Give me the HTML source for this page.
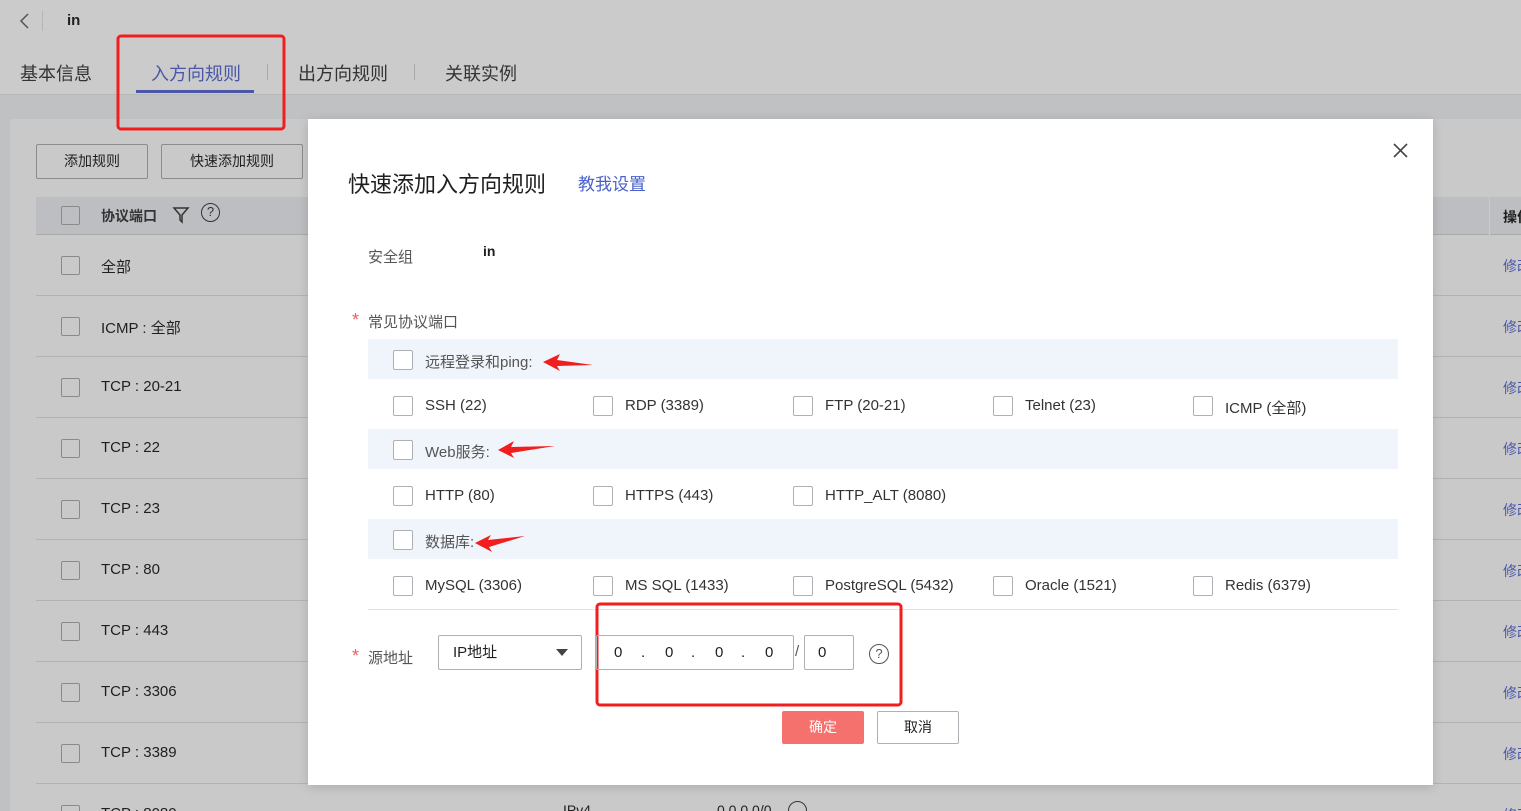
<!DOCTYPE html><html style="width:1521px;height:811px;overflow:hidden"><head><meta charset="utf-8"><style>
*{margin:0;padding:0;box-sizing:border-box}
body{width:1521px;height:811px;overflow:hidden;position:relative;background:#c0c1c3;font-family:"Liberation Sans","Noto Sans CJK SC",sans-serif;color:#1f1f1f}
.a{position:absolute;white-space:nowrap}
.cb{position:absolute;width:19px;height:19px;border:1px solid #8a8a8a;border-radius:2px}
.mcb{position:absolute;width:20px;height:20px;border:1px solid #aeb0b6;border-radius:2px;background:#fff}
.t14{font-size:15px}
.st{position:absolute;color:#f06060;font-size:18px}
</style></head><body>
<div class="a" style="left:0;top:0;width:1521px;height:95px;background:#cbcbcb;border-bottom:1px solid #b8b8b8"></div>
<svg class="a" style="left:18px;top:12px" width="14" height="18"><path d="M10 2 L3 9 L10 16" stroke="#555" stroke-width="1.5" fill="none"/></svg>
<div class="a" style="left:42px;top:11px;width:1px;height:20px;background:#b5b5b5"></div>
<div class="a" style="left:67px;top:12px;font-size:15px;font-weight:bold">in</div>
<div class="a" style="left:20px;top:60px;font-size:18px;color:#333">基本信息</div>
<div class="a" style="left:151px;top:60px;font-size:18px;color:#4a57a8">入方向规则</div>
<div class="a" style="left:136px;top:90px;width:118px;height:3px;background:#4a57a8"></div>
<div class="a" style="left:267px;top:64px;width:1px;height:16px;background:#aaa"></div>
<div class="a" style="left:298px;top:60px;font-size:18px;color:#333">出方向规则</div>
<div class="a" style="left:414px;top:64px;width:1px;height:16px;background:#aaa"></div>
<div class="a" style="left:445px;top:60px;font-size:18px;color:#333">关联实例</div>
<div class="a" style="left:10px;top:119px;width:1511px;height:692px;background:#c9c9c9"></div>
<div class="a" style="left:36px;top:144px;width:112px;height:35px;border:1px solid #8c8c8c;border-radius:2px;font-size:14px;text-align:center;line-height:33px">添加规则</div>
<div class="a" style="left:161px;top:144px;width:142px;height:35px;border:1px solid #8c8c8c;border-radius:2px;font-size:14px;text-align:center;line-height:33px">快速添加规则</div>
<div class="a" style="left:36px;top:197px;width:1485px;height:38px;background:#bdbec2;border-bottom:1px solid #aaa"></div>
<div class="cb" style="left:61px;top:206px"></div>
<div class="a" style="left:101px;top:206px;font-size:14px;font-weight:bold;color:#333">协议端口</div>
<svg class="a" style="left:172px;top:206px" width="18" height="18"><path d="M2 2 H16 L10 9 V16 L8 14 V9 Z" stroke="#333" stroke-width="1.5" fill="none"/></svg>
<div class="a" style="left:201px;top:203px;width:19px;height:19px;border:1.5px solid #333;border-radius:50%;font-size:13px;text-align:center;line-height:16px;color:#333">?</div>
<div class="a" style="left:1489px;top:197px;width:1px;height:38px;background:#ccc"></div>
<div class="a" style="left:1503px;top:207px;font-size:14px;font-weight:bold">操作</div>
<div id="rows"></div>
<div class="a" style="left:563px;top:802px;font-size:14px">IPv4</div>
<div class="a" style="left:717px;top:802px;font-size:14px">0.0.0.0/0</div>
<div class="a" style="left:788px;top:801px;width:19px;height:19px;border:1.5px solid #333;border-radius:50%"></div>
<div class="a" style="left:308px;top:119px;width:1125px;height:666px;background:#fff;box-shadow:0 2px 10px rgba(0,0,0,.15)"></div>
<svg class="a" style="left:1393px;top:143px" width="15" height="15"><path d="M1 1 L14 14 M14 1 L1 14" stroke="#444" stroke-width="1.6"/></svg>
<div class="a" style="left:348px;top:167px;font-size:22px;color:#1f1f1f">快速添加入方向规则</div>
<div class="a" style="left:578px;top:170px;font-size:17px;color:#4a61c9">教我设置</div>
<div class="a t14" style="left:368px;top:246px;color:#555">安全组</div>
<div class="a" style="left:483px;top:243px;font-size:14px;font-weight:bold">in</div>
<div class="st" style="left:352px;top:310px">*</div><div class="a t14" style="left:368px;top:311px;color:#555">常见协议端口</div>
<div class="a" style="left:368px;top:339px;width:1030px;height:40px;background:#f0f4fb"></div>
<div class="a" style="left:368px;top:429px;width:1030px;height:40px;background:#f0f4fb"></div>
<div class="a" style="left:368px;top:519px;width:1030px;height:40px;background:#f0f4fb"></div>
<div class="a" style="left:368px;top:609px;width:1030px;height:1px;background:#e3e3e3"></div>
<div class="mcb" style="left:393px;top:350px"></div><div class="a t14" style="left:425px;top:351px;color:#555">远程登录和ping:</div>
<div class="mcb" style="left:393px;top:440px"></div><div class="a t14" style="left:425px;top:441px;color:#555">Web服务:</div>
<div class="mcb" style="left:393px;top:530px"></div><div class="a t14" style="left:425px;top:531px;color:#555">数据库:</div>
<svg class="a" style="left:0;top:0" width="1521" height="811"><g fill="#f01e1e">
<polygon points="543,362 560,354 557,360 593,365 557,366 560,371"/>
<polygon points="498,450 514,441 511,447 555,446 511,453 514,458"/>
<polygon points="475,543 491,535 488,540 525,536 489,547 492,552"/></g>
<g fill="none" stroke="#f01e1e" stroke-width="3"><rect x="118" y="36" width="166" height="93" rx="3"/><rect x="597" y="604" width="304" height="101" rx="3"/></g></svg>
<div id="opts"></div>
<div class="st" style="left:352px;top:646px">*</div><div class="a t14" style="left:368px;top:647px;color:#555">源地址</div>
<div class="a" style="left:438px;top:635px;width:144px;height:35px;border:1px solid #aeb0b6;border-radius:2px;font-size:15px;line-height:33px;padding-left:14px">IP地址</div>
<svg class="a" style="left:556px;top:649px" width="12" height="8"><path d="M0 0 H12 L6 7 Z" fill="#444"/></svg>
<div class="a" style="left:596px;top:635px;width:198px;height:35px;border:1px solid #aeb0b6;border-radius:2px"></div>
<div class="a t14" style="left:614px;top:644px">0</div><div class="a t14" style="left:641px;top:644px">.</div>
<div class="a t14" style="left:665px;top:644px">0</div><div class="a t14" style="left:691px;top:644px">.</div>
<div class="a t14" style="left:715px;top:644px">0</div><div class="a t14" style="left:741px;top:644px">.</div>
<div class="a t14" style="left:765px;top:644px">0</div>
<div class="a t14" style="left:795px;top:643px;color:#555">/</div>
<div class="a" style="left:804px;top:635px;width:50px;height:35px;border:1px solid #aeb0b6;border-radius:2px;font-size:15px;line-height:33px;padding-left:13px">0</div>
<div class="a" style="left:869px;top:644px;width:20px;height:20px;border:1.5px solid #555;border-radius:50%;font-size:13px;text-align:center;line-height:17px;color:#555">?</div>
<div class="a" style="left:782px;top:711px;width:82px;height:33px;background:#f4716e;border-radius:2px;color:#fff;font-size:14px;text-align:center;line-height:33px">确定</div>
<div class="a" style="left:877px;top:711px;width:82px;height:33px;border:1px solid #aeb0b6;border-radius:2px;font-size:14px;text-align:center;line-height:31px">取消</div>
<script>
var r=["全部","ICMP : 全部","TCP : 20-21","TCP : 22","TCP : 23","TCP : 80","TCP : 443","TCP : 3306","TCP : 3389","TCP : 8080"],h="";
r.forEach(function(t,i){var y=265+61*i;h+='<div class="cb" style="left:61px;top:'+(y-9)+'px"></div><div class="a" style="left:101px;top:'+(y-9)+'px;font-size:15px">'+t+'</div><div class="a" style="left:1503px;top:'+(y-9)+'px;font-size:14px;color:#4a57a8">修改</div>';if(i<9)h+='<div class="a" style="left:36px;top:'+(y+30)+'px;width:1485px;height:1px;background:#b2b2b2"></div>';});
document.getElementById("rows").innerHTML=h;
var o=[[396,["SSH (22)","RDP (3389)","FTP (20-21)","Telnet (23)","ICMP (全部)"]],[486,["HTTP (80)","HTTPS (443)","HTTP_ALT (8080)"]],[576,["MySQL (3306)","MS SQL (1433)","PostgreSQL (5432)","Oracle (1521)","Redis (6379)"]]],g="";
o.forEach(function(a){a[1].forEach(function(t,j){var x=393+200*j;g+='<div class="mcb" style="left:'+x+'px;top:'+a[0]+'px"></div><div class="a t14" style="left:'+(x+32)+'px;top:'+(a[0]+1)+'px;color:#333">'+t+'</div>';});});
document.getElementById("opts").innerHTML=g;
</script>
</body></html>
